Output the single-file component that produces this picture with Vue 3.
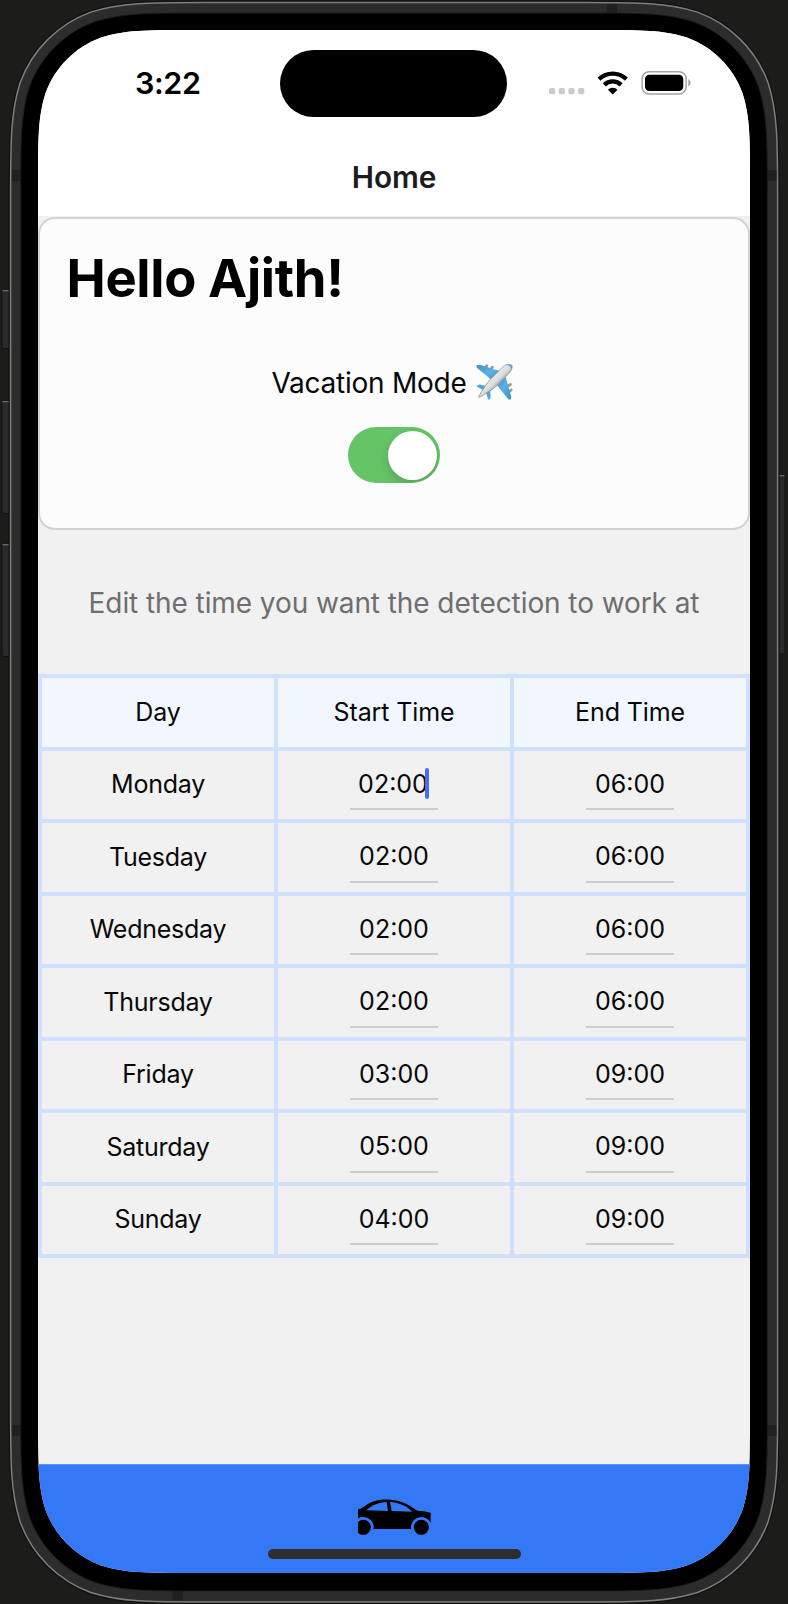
<script setup>
import { ref } from 'vue'

// Rounded rectangle with continuous (smoothed) corners
function smoothRect(x, y, w, h, r) {
  const R = x + w
  const B = y + h
  const a = 1.52866 * r
  const b = 1.08849 * r
  const c = 0.86841 * r
  const d = 0.63149 * r
  const e = 0.07491 * r
  const f = 0.37282 * r
  const g = 0.16906 * r
  return [
    `M${x + a} ${y}H${R - a}`,
    `C${R - b} ${y} ${R - c} ${y} ${R - d} ${y + e}`,
    `C${R - f} ${y + g} ${R - g} ${y + f} ${R - e} ${y + d}`,
    `C${R} ${y + c} ${R} ${y + b} ${R} ${y + a}`,
    `V${B - a}`,
    `C${R} ${B - b} ${R} ${B - c} ${R - e} ${B - d}`,
    `C${R - g} ${B - f} ${R - f} ${B - g} ${R - d} ${B - e}`,
    `C${R - c} ${B} ${R - b} ${B} ${R - a} ${B}`,
    `H${x + a}`,
    `C${x + b} ${B} ${x + c} ${B} ${x + d} ${B - e}`,
    `C${x + f} ${B - g} ${x + g} ${B - f} ${x + e} ${B - d}`,
    `C${x} ${B - c} ${x} ${B - b} ${x} ${B - a}`,
    `V${y + a}`,
    `C${x} ${y + b} ${x} ${y + c} ${x + e} ${y + d}`,
    `C${x + g} ${y + f} ${x + f} ${y + g} ${x + d} ${y + e}`,
    `C${x + c} ${y} ${x + b} ${y} ${x + a} ${y}Z`
  ].join('')
}

const outer = smoothRect(10.6, 2.6, 767, 1599.4, 127)
const bezel = smoothRect(20.7, 13, 746.6, 1578, 117)
const screenClip = { clipPath: `path('${smoothRect(0, 0, 712, 1543, 100)}')` }

const buttons = [
  { x: 2, y: 290, w: 9, h: 58.5 },
  { x: 2, y: 401, w: 9, h: 112.5 },
  { x: 2, y: 544, w: 9, h: 112.5 },
  { x: 777, y: 475, w: 8, h: 179 }
]

const vacation = ref(true)
const rows = ref([
  { day: 'Monday', start: '02:00', end: '06:00', editing: true },
  { day: 'Tuesday', start: '02:00', end: '06:00' },
  { day: 'Wednesday', start: '02:00', end: '06:00' },
  { day: 'Thursday', start: '02:00', end: '06:00' },
  { day: 'Friday', start: '03:00', end: '09:00' },
  { day: 'Saturday', start: '05:00', end: '09:00' },
  { day: 'Sunday', start: '04:00', end: '09:00' }
])
</script>

<template>
  <div class="device">
    <svg class="chrome" width="788" height="1604" viewBox="0 0 788 1604">
      <g v-for="b in buttons" :key="b.y">
        <rect :x="b.x" :y="b.y" :width="b.w" :height="b.h" rx="2" fill="#2a2a2a" stroke="#121212" stroke-width="1" />
        <rect :x="b.x + 0.5" :y="b.y" :width="b.w - 1" height="1.3" fill="#6a6a6a" />
      </g>
      <path :d="outer" fill="none" stroke="#111110" stroke-width="4" />
      <path :d="outer" fill="#2c2c2c" stroke="#7e7e7e" stroke-width="1.5" />
      <g fill="#202020">
        <rect x="12" y="170" width="9" height="11" />
        <rect x="767" y="170" width="9.5" height="11" />
        <rect x="12" y="1425" width="9" height="11" />
        <rect x="767" y="1425" width="9.5" height="11" />
        <rect x="606.5" y="4" width="10.5" height="9.5" />
        <rect x="172.5" y="1591" width="10.5" height="9.5" />
      </g>
      <path :d="bezel" fill="#000" stroke="#1c1c1c" stroke-width="1" />
    </svg>

    <div class="screen" :style="screenClip">
      <div class="status">
        <div class="clock">3:22</div>
        <div class="island"></div>
        <div class="indicators">
          <svg width="142" height="26" viewBox="0 0 142 26">
            <g fill="#cbcbcb">
              <rect x="0" y="18" width="6.2" height="6.2" rx="1.7" />
              <rect x="9.7" y="18" width="6.2" height="6.2" rx="1.7" />
              <rect x="19.4" y="18" width="6.2" height="6.2" rx="1.7" />
              <rect x="29.1" y="18" width="6.2" height="6.2" rx="1.7" />
            </g>
            <g fill="none" stroke="#000" stroke-width="4.3">
              <path d="M50 9.1A20 20 0 0 1 77.4 9.1" />
              <path d="M55.3 14.9A12 12 0 0 1 72.1 14.9" />
            </g>
            <path d="M63.7 24.4L58.9 19.7A6.7 6.7 0 0 1 68.5 19.7Z" />
            <rect x="93.1" y="1.8" width="44" height="22.1" rx="6.8" fill="none" stroke="#a3a3a3" stroke-width="1.5" />
            <rect x="96" y="4.7" width="38.3" height="16.2" rx="4.3" />
            <path d="M139.3 9.3C142.3 10.4 142.3 15.2 139.3 16.3Z" fill="#a0a0a0" />
          </svg>
        </div>
      </div>
      <header class="nav">Home</header>

      <section class="card">
        <h1 class="hello">Hello Ajith!</h1>
        <div class="mode">
          <span class="mode-label">Vacation Mode</span>
          <svg class="plane" width="37" height="37" viewBox="0 0 37 37">
            <defs>
              <linearGradient id="body" x1="0" y1="0" x2="1" y2="1">
                <stop offset="0.3" stop-color="#f4f4f4" />
                <stop offset="0.52" stop-color="#dcdcdc" />
                <stop offset="0.68" stop-color="#808080" />
              </linearGradient>
              <linearGradient id="wing" x1="0" y1="0" x2="1" y2="1">
                <stop offset="0" stop-color="#438fc4" />
                <stop offset="0.5" stop-color="#5cb0e5" />
                <stop offset="1" stop-color="#3c8ec7" />
              </linearGradient>
            </defs>
            <g stroke="#999" stroke-width="2.8" stroke-linecap="round">
              <path d="M10.8 1.8L9.3 4M16.4 3.2L14.5 5.6M34.4 20.4L32.2 22M35.2 26L33 27.8" />
            </g>
            <path d="M.4 1.2L4 .8 25 7.4 17 17 .8 3.7Z" fill="url(#wing)" />
            <path d="M29.4 12L35.2 32.5 34.8 35.6 32.5 35.6 20 20Z" fill="url(#wing)" />
            <path d="M.4 22.2L3.2 20.6 12 22.2 7.8 26.4Z" fill="#4fa6dc" />
            <path d="M14.2 24.4L14.6 34.8 12.4 35.8 9.8 28.4Z" fill="#4fa6dc" />
            <path d="M35.5.8C33-.6 29 .8 26.3 3.4L15 14.7C10.5 19.4 7 25.3 2.5 32.8L3.3 33.4C10.5 29.2 16.6 25.6 21.6 21L32.8 9.4C35.6 6.4 37 2.6 35.5.8Z" fill="url(#body)" stroke="#8e8e8e" stroke-width=".8" />
            <path d="M31.4 1.2C34 .2 36.5 1.2 36 3.5 35.6 5.6 34.9 6 34.9 4.5 34.8 2.6 34 2 31.4 1.2Z" fill="#559fce" />
          </svg>
        </div>
        <button class="switch" :class="{ on: vacation }" @click="vacation = !vacation">
          <span class="knob"></span>
        </button>
      </section>

      <p class="hint"><span>Edit the time you want the detection to work at</span></p>

      <div class="table">
        <div class="cell head">Day</div>
        <div class="cell head">Start Time</div>
        <div class="cell head">End Time</div>
        <template v-for="r in rows" :key="r.day">
          <div class="cell day">{{ r.day }}</div>
          <div class="cell">
            <div class="field" :class="{ editing: r.editing }">{{ r.start }}<i v-if="r.editing" class="caret"></i></div>
          </div>
          <div class="cell"><div class="field">{{ r.end }}</div></div>
        </template>
      </div>

      <footer class="tabbar">
        <svg class="car" width="73" height="36" viewBox="54 57 219 108">
          <path d="M54 88C63 86 67 84 75 78 95 63 114 58.5 140 58.5 176 58.5 203 71 232 92 250 93 264 95 272 98.5V127L214 147H54Z" />
          <path d="M79 91C95 76 115 67 140 66L144 93Z" fill="#3478f6" />
          <path d="M150 66C177 68 200 78 217 95L155 93Z" fill="#3478f6" />
          <circle cx="70" cy="142" r="31" fill="#3478f6" />
          <circle cx="244" cy="142" r="31" fill="#3478f6" />
          <circle cx="70" cy="142" r="22.5" />
          <circle cx="244" cy="142" r="22.5" />
        </svg>
        <div class="home-indicator"></div>
      </footer>
    </div>
  </div>
</template>

<style>
body {
  margin: 0;
  background: #1c1c1a;
}
</style>

<style scoped>
.device {
  position: relative;
  box-sizing: border-box;
  width: 788px;
  height: 1604px;
  padding: 30px 38px 31px;
  overflow: hidden;
  background: #1c1c1a;
  font-family: Inter, "Liberation Sans", sans-serif;
  color: #080808;
}
.chrome {
  position: absolute;
  inset: 0;
}
.screen {
  position: relative;
  display: flex;
  flex-direction: column;
  width: 712px;
  height: 1543px;
  background: #f1f1f1;
}
.status {
  display: grid;
  grid-template-columns: 242.4px 227px 1fr;
  align-items: start;
  height: 107px;
  padding-top: 20px;
  box-sizing: border-box;
  background: #fff;
}
.clock {
  padding-left: 97px;
  margin-top: 13px;
  line-height: 40px;
  font-size: 30.5px;
  font-weight: 600;
  letter-spacing: -0.4px;
  color: #000;
}
.island {
  height: 67px;
  border-radius: 34px;
  background: #000;
}
.indicators {
  padding: 20px 0 0 41.6px;
  line-height: 0;
}
.nav {
  height: 79px;
  line-height: 80px;
  background: #fff;
  text-align: center;
  font-size: 29.8px;
  font-weight: 600;
  letter-spacing: -0.1px;
  color: #1c1c1e;
}
.card {
  display: flex;
  flex-direction: column;
  align-items: center;
  box-sizing: border-box;
  height: 313px;
  margin: 1px 0 0;
  border: 2px solid #d3d3d3;
  border-radius: 17px;
  background: #fcfcfc;
}
.hello {
  align-self: flex-start;
  margin: 27px 0 0 26.5px;
  line-height: 64px;
  font-size: 52.5px;
  font-weight: 700;
  letter-spacing: -0.33px;
  color: #000;
  white-space: nowrap;
}
.mode {
  display: flex;
  align-items: center;
  gap: 9px;
  height: 40px;
  margin: 52px 4px 0 0;
}
.mode-label {
  padding-top: 2px;
  font-size: 28px;
  letter-spacing: -0.25px;
  white-space: nowrap;
}
.switch {
  width: 92px;
  height: 56px;
  margin-top: 25px;
  padding: 3.5px;
  border: 0;
  border-radius: 28px;
  overflow: hidden;
  background: #d9d9dc;
  display: flex;
}
.switch.on {
  justify-content: flex-end;
  background: #65c466;
}
.knob {
  width: 49px;
  height: 49px;
  border-radius: 50%;
  background: #fff;
  box-shadow: 0 4px 10px rgba(0, 0, 0, 0.16);
}
.hint {
  display: flex;
  justify-content: center;
  align-items: center;
  box-sizing: border-box;
  height: 144px;
  margin: 0;
  padding-top: 2px;
  font-size: 28px;
  letter-spacing: -0.08px;
  white-space: nowrap;
  color: #6e6e70;
}
.table {
  display: grid;
  grid-template-columns: repeat(3, 1fr);
  grid-auto-rows: 68.5px;
  gap: 4px;
  padding: 4px;
  background: #cfe1fd;
}
.cell {
  display: flex;
  justify-content: center;
  align-items: center;
  background: #f1f1f1;
  font-size: 25px;
  white-space: nowrap;
}
.head {
  background: #f2f7ff;
  letter-spacing: -0.12px;
}
.day {
  box-sizing: border-box;
  padding-bottom: 1px;
  letter-spacing: -0.25px;
}
.field {
  position: relative;
  box-sizing: border-box;
  width: 88px;
  height: 51px;
  border-bottom: 2px solid #cdcdcd;
  line-height: 31px;
  padding-top: 9.5px;
  text-align: center;
}
.field.editing {
  padding-right: 2px;
}
.caret {
  position: absolute;
  left: 75px;
  top: 9px;
  width: 4px;
  height: 31px;
  border-radius: 2px;
  background: #4a6cec;
}
.tabbar {
  display: flex;
  flex-direction: column;
  align-items: center;
  box-sizing: border-box;
  height: 109px;
  margin-top: auto;
  padding-top: 34px;
  border-top: 1px solid #5b93f5;
  background: #3478f6;
}
.home-indicator {
  width: 253px;
  height: 10px;
  margin-top: 14px;
  border-radius: 5px;
  background: #2e2e2e;
}
</style>
